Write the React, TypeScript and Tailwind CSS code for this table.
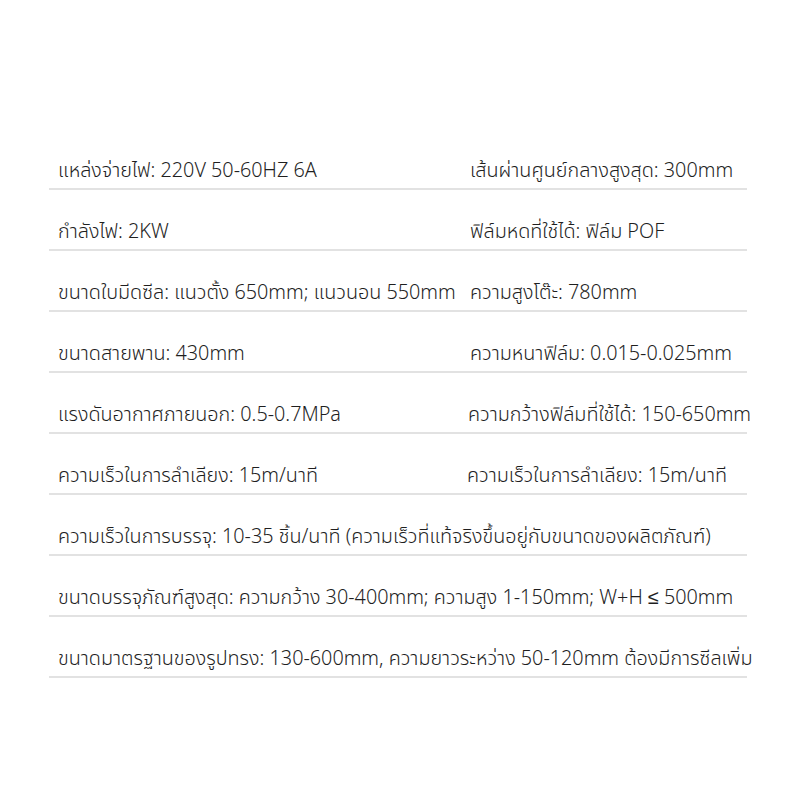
import React from "react";

const pairs: [string, string][] = [
  ["แหล่งจ่ายไฟ: 220V 50-60HZ 6A", "เส้นผ่านศูนย์กลางสูงสุด: 300mm"],
  ["กำลังไฟ: 2KW", "ฟิล์มหดที่ใช้ได้: ฟิล์ม POF"],
  ["ขนาดใบมีดซีล: แนวตั้ง 650mm; แนวนอน 550mm", "ความสูงโต๊ะ: 780mm"],
  ["ขนาดสายพาน: 430mm", "ความหนาฟิล์ม: 0.015-0.025mm"],
  ["แรงดันอากาศภายนอก: 0.5-0.7MPa", "ความกว้างฟิล์มที่ใช้ได้: 150-650mm"],
  ["ความเร็วในการลำเลียง: 15m/นาที", "ความเร็วในการลำเลียง: 15m/นาที"],
];

const full: string[] = [
  "ความเร็วในการบรรจุ: 10-35 ชิ้น/นาที (ความเร็วที่แท้จริงขึ้นอยู่กับขนาดของผลิตภัณฑ์)",
  "ขนาดบรรจุภัณฑ์สูงสุด: ความกว้าง 30-400mm; ความสูง 1-150mm; W+H ≤ 500mm",
  "ขนาดมาตรฐานของรูปทรง: 130-600mm, ความยาวระหว่าง 50-120mm ต้องมีการซีลเพิ่ม",
];

export default function App() {
  return (
    <div
      className="w-[800px] h-[800px] bg-white text-[#1f1f1f] font-light"
      style={{ fontFamily: '"Noto Sans Thai", "Noto Sans", sans-serif' }}
    >
      <div className="pt-[129px] ml-[49px] w-[698px] flex flex-col">
        {pairs.map(([a, b], i) => (
          <div
            key={i}
            className="h-[61px] flex items-end pb-[1px] border-b-2 border-[#e2e2e2] text-[19.8px] whitespace-nowrap"
          >
            <div className={`shrink-0 pl-[9px] ${i === 5 ? "w-[418px]" : i === 4 ? "w-[419px]" : "w-[421px]"}`}>{a}</div>
            <div className="shrink-0">{b}</div>
          </div>
        ))}
        {full.map((t, i) => (
          <div
            key={i}
            className="h-[61px] flex items-end pb-[1px] border-b-2 border-[#e2e2e2] text-[19.8px] whitespace-nowrap"
          >
            <div className="pl-[9px]">{t}</div>
          </div>
        ))}
      </div>
    </div>
  );
}
